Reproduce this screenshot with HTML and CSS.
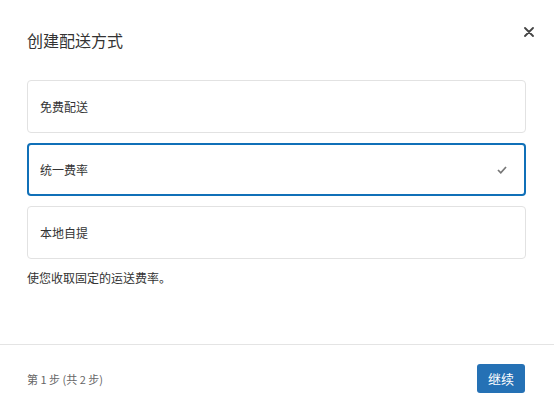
FILE: index.html
```html
<!DOCTYPE html>
<html lang="zh-CN">
<head>
    <meta charset="UTF-8">
    <meta name="viewport" content="width=device-width, initial-scale=1.0">
    <title>创建配送方式</title>
    <link rel="stylesheet" href="styles.css">
</head>
<body>
    <div class="dialog">
        <div class="dialog-body">
            <div class="dialog-header">
                <h2>创建配送方式</h2>
                <button class="close" aria-label="关闭">
                    <svg width="10" height="10" viewBox="0 0 10 10"><path d="M1 1L9 9M9 1L1 9" stroke="#444" stroke-width="1.8" stroke-linecap="round"/></svg>
                </button>
            </div>
            <div class="options">
                <div class="option">免费配送</div>
                <div class="option selected">
                    <span>统一费率</span>
                    <svg class="check" width="10" height="8" viewBox="0 0 10 8"><path d="M1 4L3.8 6.8L9 1" fill="none" stroke="#777" stroke-width="1.7"/></svg>
                </div>
                <div class="option">本地自提</div>
            </div>
            <p class="desc">使您收取固定的运送费率。</p>
        </div>
        <div class="dialog-footer">
            <span class="step">第 1 步 (共 2 步)</span>
            <button class="primary">继续</button>
        </div>
    </div>
</body>
</html>
```

FILE: styles.css
```css
* { margin: 0; padding: 0; box-sizing: border-box; }
body {
    font-family: "Noto Sans CJK SC", "Noto Sans", sans-serif;
    color: #333;
    background: #fff;
}
.dialog {
    height: 100vh;
    display: flex;
    flex-direction: column;
}
.dialog-body {
    flex: 1;
    padding: 27px 28px 0 27px;
}
.dialog-header {
    display: flex;
    justify-content: space-between;
    align-items: center;
    margin-bottom: 27px;
}
.dialog-header h2 {
    font-size: 16px;
    font-weight: normal;
    line-height: 26px;
    color: #333;
}
.close {
    background: none;
    border: none;
    cursor: pointer;
    display: flex;
    margin-right: -8px;
    margin-top: -16px;
}
.options {
    display: flex;
    flex-direction: column;
    gap: 10px;
}
.option {
    height: 53px;
    border: 1px solid #e2e2e2;
    border-radius: 4px;
    padding: 0 12px;
    display: flex;
    align-items: center;
    justify-content: space-between;
    font-size: 12px;
    color: #333;
}
.option.selected {
    border: 2px solid #1070b8;
    padding: 0 17px 0 11px;
}
.desc {
    margin-top: 11px;
    font-size: 12px;
    line-height: 16px;
    color: #333;
}
.dialog-footer {
    border-top: 1px solid #e4e4e4;
    padding: 19px 29px 16px 27px;
    display: flex;
    justify-content: space-between;
    align-items: center;
}
.step {
    font-size: 11px;
    color: #666;
}
.primary {
    background: #2571b5;
    color: #fff;
    border: none;
    border-radius: 3px;
    width: 48px;
    height: 29px;
    font-family: inherit;
    font-size: 13px;
    cursor: pointer;
}
```
